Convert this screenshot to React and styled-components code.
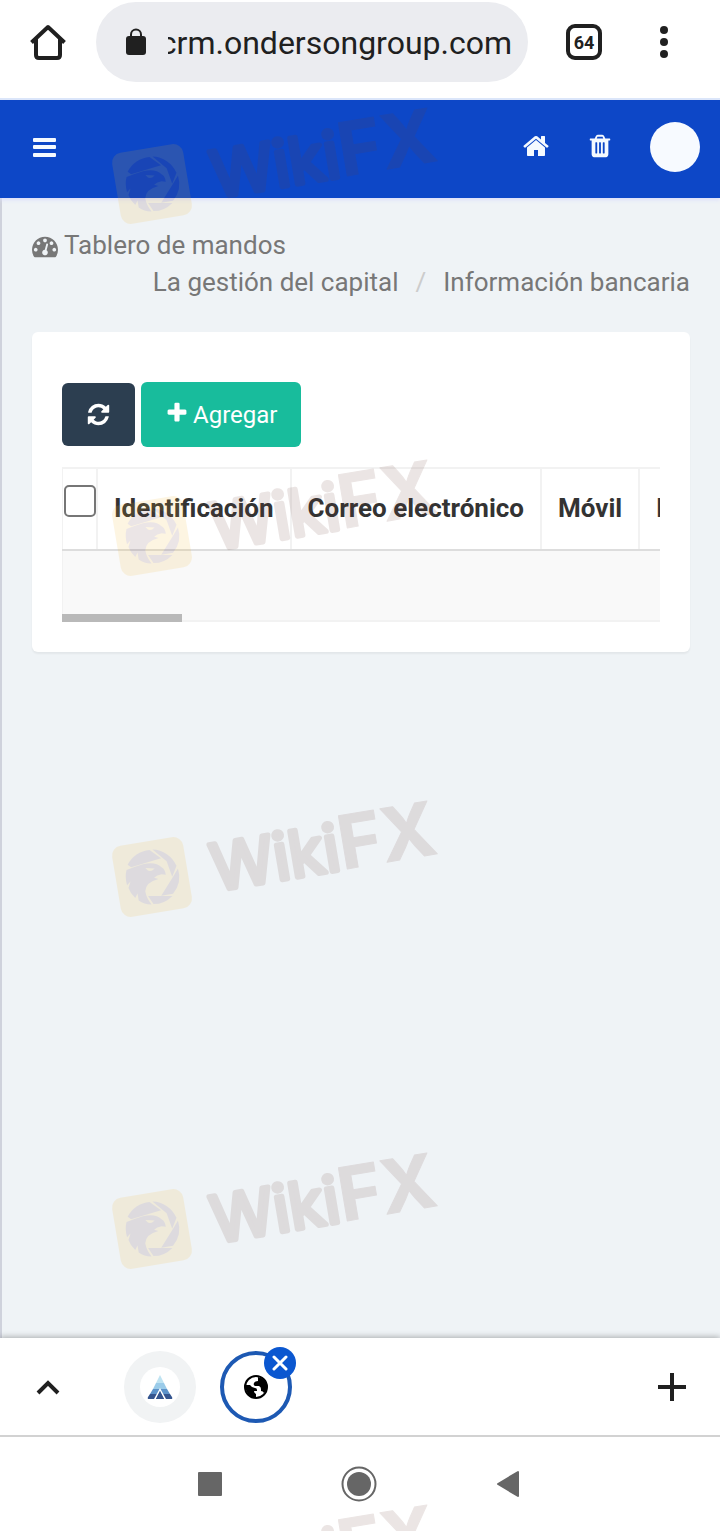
import React from 'react'
import styled, { createGlobalStyle } from 'styled-components';

const columns = ['Identificación', 'Correo electrónico', 'Móvil', 'Nombre'];

const icons = {
  home: 'M1472 992v480q0 26-19 45t-45 19h-384v-384h-256v384h-384q-26 0-45-19t-19-45v-480q0-1 .5-3t.5-3l575-474 575 474q1 2 1 6zm223-69l-62 74q-8 9-21 11h-3q-13 0-21-7l-692-577-692 577q-12 8-24 7-13-2-21-11l-62-74q-8-10-7-23.5t11-21.5l719-599q32-26 76-26t76 26l244 204v-195q0-14 9-23t23-9h192q14 0 23 9t9 23v408l219 182q10 8 11 21.5t-7 23.5z',
  trash: 'M704 1376v-704q0-14-9-23t-23-9h-64q-14 0-23 9t-9 23v704q0 14 9 23t23 9h64q14 0 23-9t9-23zm256 0v-704q0-14-9-23t-23-9h-64q-14 0-23 9t-9 23v704q0 14 9 23t23 9h64q14 0 23-9t9-23zm256 0v-704q0-14-9-23t-23-9h-64q-14 0-23 9t-9 23v704q0 14 9 23t23 9h64q14 0 23-9t9-23zm-544-992h448l-48-117q-7-9-17-11h-317q-10 2-17 11zm928 32v64q0 14-9 23t-23 9h-96v948q0 83-47 143.5t-113 60.5h-832q-66 0-113-58.5t-47-141.5v-952h-96q-14 0-23-9t-9-23v-64q0-14 9-23t23-9h309l70-167q15-37 54-63t79-26h320q40 0 79 26t54 63l70 167h309q14 0 23 9t9 23z',
  refresh: 'M1639 1056q0 5-1 7-64 268-268 434.5t-478 166.5q-146 0-282.5-55t-243.5-157l-129 129q-19 19-45 19t-45-19-19-45v-448q0-26 19-45t45-19h448q26 0 45 19t19 45-19 45l-137 137q71 66 161 102t187 36q134 0 250-65t186-179q11-17 53-117 8-23 30-23h192q13 0 22.5 9.5t9.5 22.5zm25-800v448q0 26-19 45t-45 19h-448q-26 0-45-19t-19-45 19-45l138-138q-148-137-349-137-134 0-250 65t-186 179q-11 17-53 117-8 23-30 23h-199q-13 0-22.5-9.5t-9.5-22.5v-7q65-268 270-434.5t480-166.5q146 0 284 55.5t245 156.5l130-129q19-19 45-19t45 19 19 45z',
  plus: 'M1600 736v192q0 40-28 68t-68 28h-416v416q0 40-28 68t-68 28h-192q-40 0-68-28t-28-68v-416h-416q-40 0-68-28t-28-68v-192q0-40 28-68t68-28h416v-416q0-40 28-68t68-28h192q40 0 68 28t28 68v416h416q40 0 68 28t28 68z',
  dashboard: 'M384 1152q0-53-37.5-90.5t-90.5-37.5-90.5 37.5-37.5 90.5 37.5 90.5 90.5 37.5 90.5-37.5 37.5-90.5zm192-448q0-53-37.5-90.5t-90.5-37.5-90.5 37.5-37.5 90.5 37.5 90.5 90.5 37.5 90.5-37.5 37.5-90.5zm428 481l101-382q6-26-7.5-48.5t-38.5-29.5-48 6.5-30 39.5l-101 382q-60 5-107 43.5t-63 98.5q-20 77 20 146t117 89 146-20 89-117q16-60-6-117t-72-91zm660-33q0-53-37.5-90.5t-90.5-37.5-90.5 37.5-37.5 90.5 37.5 90.5 90.5 37.5 90.5-37.5 37.5-90.5zm-640-640q0-53-37.5-90.5t-90.5-37.5-90.5 37.5-37.5 90.5 37.5 90.5 90.5 37.5 90.5-37.5 37.5-90.5zm448 192q0-53-37.5-90.5t-90.5-37.5-90.5 37.5-37.5 90.5 37.5 90.5 90.5 37.5 90.5-37.5 37.5-90.5zm320 448q0 261-141 483-19 29-54 29h-1402q-35 0-54-29-141-221-141-483 0-182 71-348t191-286 286-191 348-71 348 71 286 191 191 286 71 348z',
};

function Icon({ name, size }) {
    return (
        <svg width={size} height={size} viewBox="0 0 1792 1792" fill="currentColor" aria-hidden="true">
            <path d={icons[name]} />
        </svg>
    )
}

function BrowserBar() {
    return (
        <BrowserTop>
            <IconButton $w={36} aria-label="Inicio">
                <svg width="36" height="36" viewBox="0 0 36 36" fill="none" stroke="#202020" strokeWidth="4" strokeLinejoin="round">
                    <path d="M1.500 18.500L18 3l16.500 15.500M6 15v16q0 3 3 3h18q3 0 3-3V15" />
                </svg>
            </IconButton>
            <AddressBox>
                <svg width="20" height="28" viewBox="0 0 20 28" aria-hidden="true">
                    <path d="M5 10V6.500a5 5 0 0 1 10 0V10" fill="none" stroke="#202020" strokeWidth="2" />
                    <rect y="8" width="20" height="19" rx="3" fill="#202020" />
                </svg>
                <Address aria-label="Dirección" dir="rtl" defaultValue="crm.ondersongroup.com" />
            </AddressBox>
            <TabCount aria-label="Pestañas">64</TabCount>
            <IconButton $w={36} aria-label="Menú">
                <svg width="10" height="34" viewBox="0 0 10 34" fill="#202020">
                    <circle cx="5" cy="5" r="4" />
                    <circle cx="5" cy="17" r="4" />
                    <circle cx="5" cy="29" r="4" />
                </svg>
            </IconButton>
        </BrowserTop>
    )
}

function AppHeader() {
    return (
        <Header>
            <IconButton $w={26} aria-label="Abrir menú">
                <svg width="24" height="20" viewBox="0 0 24 20" fill="currentColor">
                    <rect x="1" y="1" width="23" height="4" rx="1" />
                    <rect x="1" y="8" width="23" height="4" rx="1" />
                    <rect x="1" y="16" width="23" height="4" rx="1" />
                </svg>
            </IconButton>
            <HeaderLinks>
                <HeaderLink href="#inicio" aria-label="Página principal"><Icon name="home" size={28} /></HeaderLink>
                <HeaderLink href="#papelera" aria-label="Papelera"><Icon name="trash" size={26} /></HeaderLink>
                <Avatar aria-label="Perfil" />
            </HeaderLinks>
        </Header>
    )
}

function BankTable() {
    return (
        <TableScroll>
            <Table>
                <thead>
                    <tr>
                        <CheckCell><CheckBox type="checkbox" aria-label="Seleccionar todo" /></CheckCell>
                        {
                            columns.map(item => (
                                <HeadCell key={item}>{item}</HeadCell>
                            ))
                        }
                    </tr>
                </thead>
                <tbody>
                    <tr>
                        <EmptyCell colSpan={columns.length + 1} />
                    </tr>
                </tbody>
            </Table>
            <ScrollThumb />
        </TableScroll>
    )
}

function WikiMark() {
    return (
        <svg width="350" height="130" viewBox="0 0 350 130" opacity=".13">
            <g transform="translate(52 84) rotate(-9.500)">
                <rect x="-36" y="-36" width="72" height="72" rx="10" fill="#f0b428" />
                <g fill="#6c3d48">
                    <path d="M-22-16A27 27 0 0 1 2-27L12-17L-19-13Z" />
                    <path d="M5-27A27 27 0 0 1 26-7L20 3L17-13Z" />
                    <path d="M27-4A27 27 0 0 1 18 20L6 20L21 3Z" />
                    <path d="M17 22A27 27 0 0 1-3 27L-7 18Z" />
                    <path d="M-24-11Q-15-13-7-14Q6-15 11-8Q14-6 14 0L10-1Q5-1 2 1L6 3Q-7 4-9 13Q-9 20-5 27Q-12 26-17 21L-17 14L-20 18Q-24 13-25 7L-22 1L-26 4Q-27-4-24-11Z" />
                </g>
                <path d="M-5-10L4-8Q0-5-3-7Z" fill="#f0b428" />
            </g>
            <MarkText x="115" y="98" transform="rotate(-9.500 115 98)">
                <tspan>Wiki</tspan><MarkBold>FX</MarkBold>
            </MarkText>
        </svg>
    )
}

function TabStrip() {
    return (
        <Strip>
            <IconButton $w={36} aria-label="Expandir">
                <svg width="24" height="16" viewBox="0 0 24 16" fill="none" stroke="#202020" strokeWidth="4">
                    <path d="M2 14L12 4l10 10" />
                </svg>
            </IconButton>
            <Tabs>
                <TabButton aria-label="Pestaña 1">
                    <Favicon>
                        <svg width="26" height="24" viewBox="0 0 26 24">
                            <path d="M13 0L17 8H9Z" fill="#bfe3f2" />
                            <path d="M9 8H17L20 14H6Z" fill="#9acbe9" />
                            <path d="M6 14H20L23 19H3Z" fill="#5c92c9" />
                            <path d="M3 19H23L25 22Q26 24 24 24H2Q0 24 1 22Z" fill="#34558f" />
                            <path d="M13 13L7 24H9L13 16L17 24H19Z" fill="#fff" />
                            <path d="M13 16L17 24H9Z" fill="#34558f" />
                        </svg>
                    </Favicon>
                </TabButton>
                <TabSlot>
                    <TabButton $active aria-label="Pestaña 2">
                        <svg width="24" height="24" viewBox="0 0 24 24">
                            <circle cx="12" cy="12" r="11" fill="#fff" stroke="#000" strokeWidth="2" />
                            <path d="M1 10H6Q8 13 11 13Q13 13 13 15V16H10Q10 18 12 19V23Q2 22 1 10ZM14 2Q23 4 23 13Q22 17 20 18Q19 16 17 16V14Q17 12 15 11H11Q9 10 10 8Q11 6 14 6Z" />
                        </svg>
                    </TabButton>
                    <CloseBadge aria-label="Cerrar pestaña">
                        <svg width="16" height="16" viewBox="0 0 16 16" stroke="#fff" strokeWidth="3" strokeLinecap="round">
                            <path d="M2 2l12 12M14 2L2 14" />
                        </svg>
                    </CloseBadge>
                </TabSlot>
            </Tabs>
            <IconButton $w={36} aria-label="Nueva pestaña">
                <svg width="28" height="28" viewBox="0 0 28 28" stroke="#202020" strokeWidth="4">
                    <path d="M14 0v28M0 14h28" />
                </svg>
            </IconButton>
        </Strip>
    )
}

function SystemNav() {
    return (
        <SystemBar>
            <IconButton $w={36} aria-label="Recientes">
                <svg width="24" height="24" viewBox="0 0 24 24"><rect width="24" height="24" rx="1" fill="#666" /></svg>
            </IconButton>
            <IconButton $w={36} aria-label="Inicio del sistema">
                <svg width="36" height="36" viewBox="0 0 36 36">
                    <circle cx="18" cy="18" r="16.500" fill="none" stroke="#666" strokeWidth="2" />
                    <circle cx="18" cy="18" r="12" fill="#666" />
                </svg>
            </IconButton>
            <IconButton $w={36} aria-label="Atrás">
                <svg width="24" height="28" viewBox="0 0 24 28">
                    <path d="M2 14L22 2V26Z" fill="#666" stroke="#666" strokeWidth="2" strokeLinejoin="round" />
                </svg>
            </IconButton>
        </SystemBar>
    )
}

function App() {
    return (
        <Screen>
            <GlobalStyle />
            <BrowserBar />
            <AppHeader />
            <Content>
                <Crumbs aria-label="Ruta">
                    <CrumbLink href="#tablero"><Icon name="dashboard" size={26} /> Tablero de mandos</CrumbLink>
                    <CrumbRow>
                        <CrumbLink href="#capital">La gestión del capital</CrumbLink>
                        <Slash>/</Slash>
                        <CrumbLink href="#banco">Información bancaria</CrumbLink>
                    </CrumbRow>
                </Crumbs>
                <Card>
                    <Toolbar>
                        <ToolButton $color="#2c3e50" $h={63} aria-label="Actualizar"><Icon name="refresh" size={25} /></ToolButton>
                        <ToolButton $color="#18bc9c" $h={65} $lift={4}><Icon name="plus" size={24} />Agregar</ToolButton>
                    </Toolbar>
                    <BankTable />
                </Card>
            </Content>
            <TabStrip />
            <SystemNav />
            <MarkLayer aria-hidden="true">
                <WikiMark />
                <WikiMark />
                <WikiMark />
                <WikiMark />
                <WikiMark />
            </MarkLayer>
        </Screen>
    )
}

export default App

const GlobalStyle = createGlobalStyle`
* {
box-sizing: border-box;
}
body {
margin: 0;
background: #fff;
font-family: Roboto, sans-serif;
}
button, input {
font-family: inherit;
margin: 0;
}
svg {
display: block;
flex-shrink: 0;
}
`

const Screen = styled.div`
position: relative;
min-height: 100vh;
display: flex;
flex-direction: column;
overflow: hidden;
`

const IconButton = styled.button`
width: ${props => props.$w}px;
height: 36px;
padding: 0;
border: 0;
background: none;
color: inherit;
display: flex;
align-items: center;
justify-content: center;
flex-shrink: 0;
cursor: pointer;
`

const BrowserTop = styled.div`
height: 100px;
padding: 2px 38px 16px 30px;
display: flex;
align-items: center;
border-bottom: 2px solid #dbe6fa;
`

const AddressBox = styled.div`
flex: 1;
min-width: 0;
height: 80px;
margin: 0 38px 0 30px;
padding: 0 16px 0 30px;
display: flex;
align-items: center;
gap: 22px;
border-radius: 40px;
background: #ebecf0;
`

const Address = styled.input`
flex: 1;
min-width: 0;
height: 48px;
padding: 2px 0 0;
border: 0;
outline: 0;
background: none;
color: #202020;
font-size: 32px;
`

const TabCount = styled.button`
flex-shrink: 0;
width: 36px;
height: 36px;
margin-right: 44px;
padding: 0;
border: 4px solid #202020;
border-radius: 9px;
background: none;
color: #202020;
font-size: 18px;
font-weight: 700;
cursor: pointer;
`

const Header = styled.header`
height: 98px;
padding: 0 20px 4px 31px;
display: flex;
align-items: center;
justify-content: space-between;
background: #0d47c7;
color: #f5faff;
box-shadow: 0 2px 4px #dcdffa;
z-index: 1;
`

const HeaderLinks = styled.nav`
display: flex;
align-items: center;
gap: 37px;
`

const HeaderLink = styled.a`
padding-bottom: 2px;
color: inherit;
`

const Avatar = styled.button`
width: 50px;
height: 50px;
padding: 0;
border: 0;
border-radius: 50%;
background: #f7faff;
cursor: pointer;
`

const Content = styled.main`
flex: 1;
padding: 29px 30px;
border-left: 2px solid #cfd2dc;
background: #eff3f6;
`

const Crumbs = styled.nav`
font-size: 26px;
line-height: 37px;
color: #777;
`

const CrumbRow = styled.div`
display: flex;
justify-content: flex-end;
`

const CrumbLink = styled.a`
display: flex;
align-items: center;
gap: 6px;
color: inherit;
text-decoration: none;
`

const Slash = styled.span`
padding: 0 17px;
color: #ccc;
`

const Card = styled.section`
margin-top: 31px;
padding: 50px 30px 30px;
border-radius: 6px;
background: #fff;
box-shadow: 0 2px 2px rgba(0, 0, 0, .05);
`

const Toolbar = styled.div`
display: flex;
align-items: center;
gap: 6px;
`

const ToolButton = styled.button`
height: ${props => props.$h}px;
padding: 0 24px;
border: 0;
border-radius: 6px;
background: ${props => props.$color};
color: #fff;
display: flex;
align-items: center;
gap: 4px;
font-size: 24px;
cursor: pointer;

svg {
margin-bottom: ${props => props.$lift || 0}px;
}
`

const TableScroll = styled.div`
position: relative;
margin-top: 20px;
overflow: hidden;
`

const Table = styled.table`
border-collapse: collapse;
white-space: nowrap;
font-size: 26px;
color: #333;
`

const HeadCell = styled.th`
height: 82px;
padding: 0 16px 2px;
border: 2px solid #f2f2f2;
border-bottom: 2px solid #ddd;
font-weight: 700;
text-align: left;
`

const CheckCell = styled(HeadCell)`
padding: 16px 0 0 1px;
border-left-width: 1px;
vertical-align: top;
`

const CheckBox = styled.input`
appearance: none;
display: block;
width: 32px;
height: 32px;
border: 2px solid #767676;
border-radius: 5px;
background: #fff;
`

const EmptyCell = styled.td`
height: 71px;
border: 2px solid #f2f2f2;
border-left-width: 1px;
background: #f9f9f9;
`

const ScrollThumb = styled.div`
position: absolute;
left: 0;
bottom: 0;
width: 20%;
height: 8px;
background: #b9b9b9;
`

const Strip = styled.div`
height: 99px;
padding: 0 30px;
display: flex;
align-items: center;
background: #fff;
border-bottom: 2px solid #d2d2d2;
box-shadow: 0 -1px 6px rgba(0, 0, 0, .3);
z-index: 1;
`

const Tabs = styled.div`
flex: 1;
display: flex;
gap: 24px;
margin-left: 58px;
`

const TabSlot = styled.div`
position: relative;
`

const TabButton = styled.button`
width: 72px;
height: 72px;
padding: 0;
border: ${props => props.$active ? '4px solid #1d59b3' : '0'};
border-radius: 50%;
background: ${props => props.$active ? '#fff' : '#f1f3f4'};
display: flex;
align-items: center;
justify-content: center;
cursor: pointer;
`

const Favicon = styled.span`
width: 40px;
height: 40px;
border-radius: 50%;
background: #fff;
display: flex;
align-items: center;
justify-content: center;
`

const CloseBadge = styled.button`
position: absolute;
top: -4px;
right: -4px;
width: 32px;
height: 32px;
padding: 0;
border: 0;
border-radius: 50%;
background: #0b57d0;
display: flex;
align-items: center;
justify-content: center;
cursor: pointer;
`

const SystemBar = styled.div`
position: relative;
height: 94px;
padding: 0 194px 0 192px;
display: flex;
align-items: center;
justify-content: space-between;
background: #fff;
z-index: 1;
`

// repeated diagonal brand mark over the whole screen
const MarkLayer = styled.div`
position: absolute;
inset: 0;
padding: 100px 0 0 100px;
display: grid;
grid-template-rows: 352px 341px 352px 352px 130px;
align-content: start;
overflow: hidden;
pointer-events: none;
z-index: 2;
`

const MarkText = styled.text`
font-family: Inter, sans-serif;
font-size: 64px;
font-weight: 400;
fill: #6d3f37;
stroke: #6d3f37;
stroke-width: 5px;
stroke-linejoin: round;
stroke-linecap: round;
`

const MarkBold = styled.tspan`
font-size: 74px;
font-weight: 700;
stroke-width: 1px;
`
